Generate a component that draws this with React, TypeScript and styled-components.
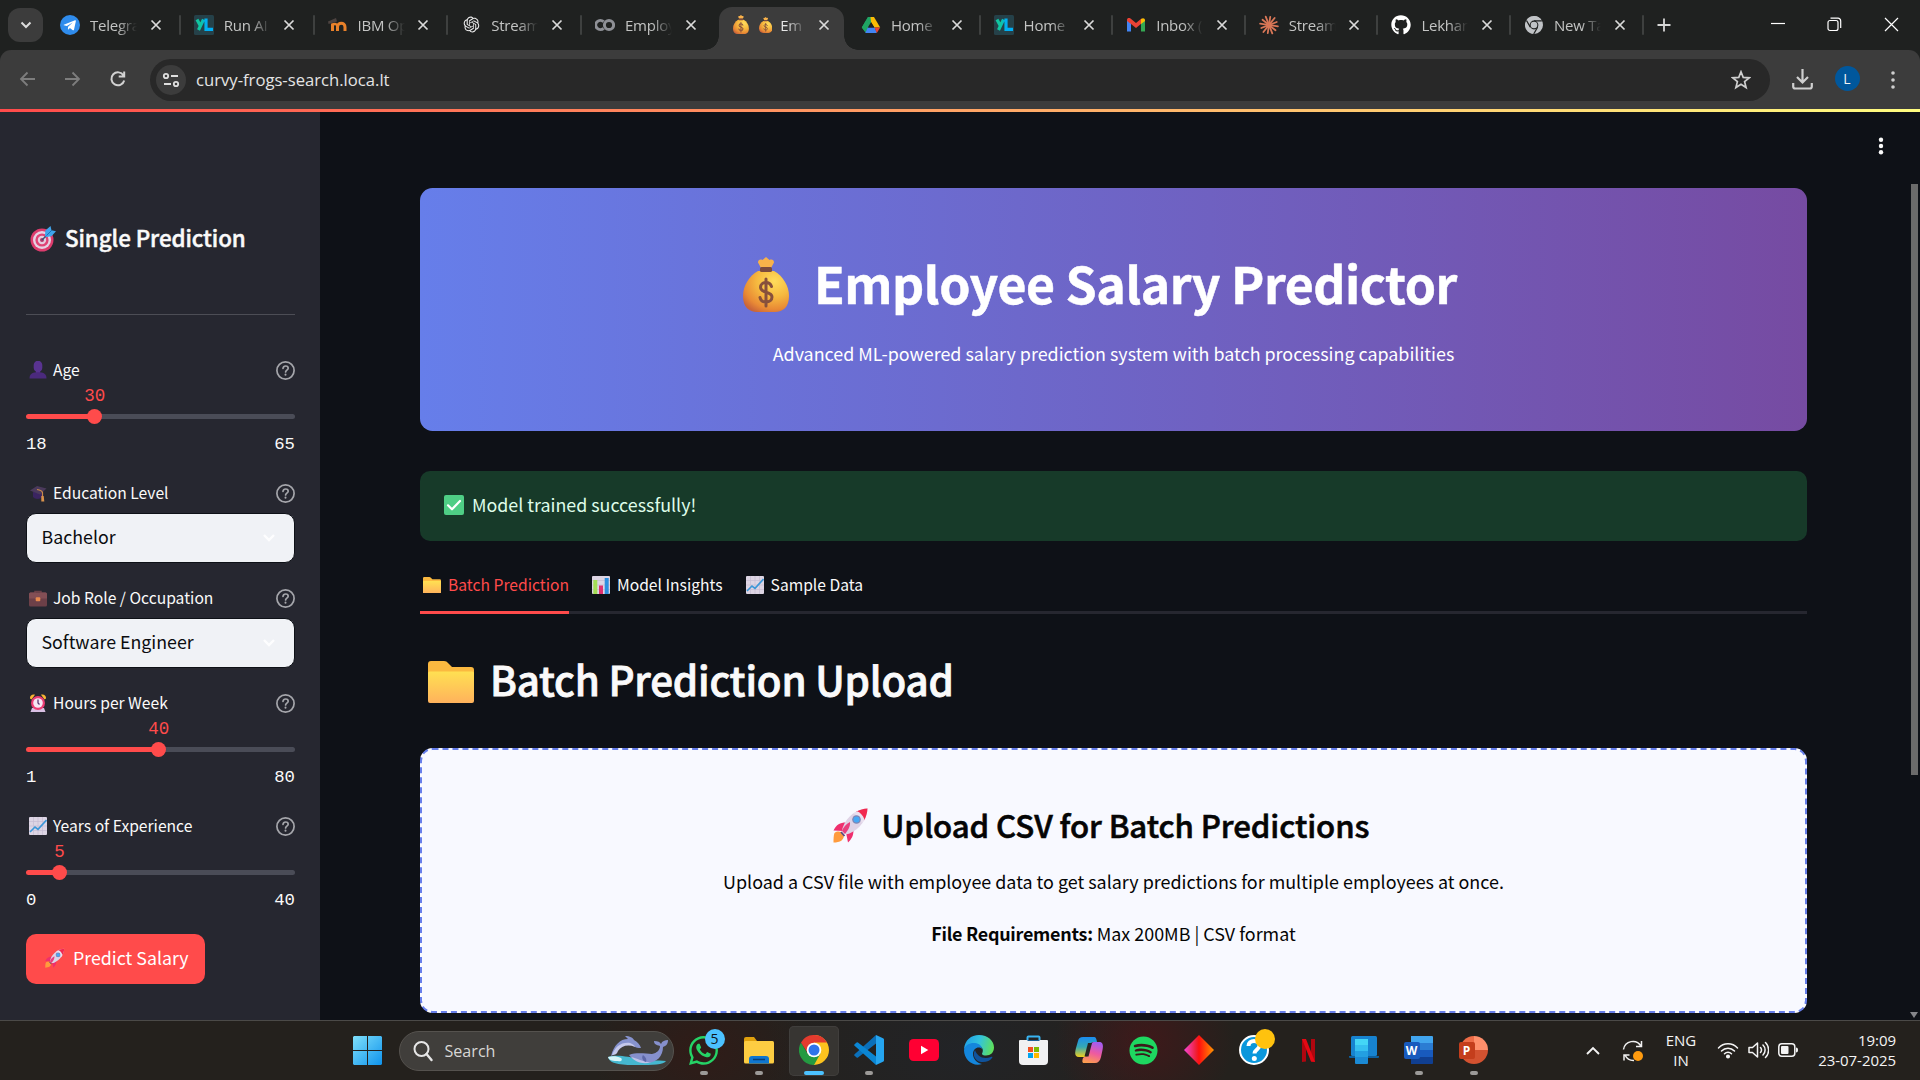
import React, { ReactNode } from 'react';
import styled, { createGlobalStyle } from 'styled-components';
import { RiOpenaiFill } from 'react-icons/ri';
import { FaGithub, FaSpotify, FaWhatsapp } from 'react-icons/fa';

const SANS = '"Noto Sans CJK SC", "Noto Sans", sans-serif';
const UI = '"Open Sans", "Noto Sans", sans-serif';
const MONO = '"Liberation Mono", monospace';

const GlobalStyle = createGlobalStyle`
  * { box-sizing: border-box; }
  html, body { margin: 0; padding: 0; background: #0e1117; overflow: hidden; }
  svg { display: block; flex: none; }
`;

const Screen = styled.div`
  width: 1920px;
  height: 1080px;
  display: flex;
  flex-direction: column;
  overflow: hidden;
  font-family: ${SANS};
`;

/* ---------- browser chrome ---------- */

const TabStrip = styled.div`
  height: 50px;
  flex: none;
  display: flex;
  background: #1f2120;
  color: #c8c9c8;
  font-family: ${UI};
`;

const TabSearch = styled.div`
  width: 35px;
  height: 34px;
  margin: 8px 4px 0 8px;
  border-radius: 12px;
  background: #3c3c3c;
  display: flex;
  align-items: center;
  justify-content: center;
`;

const BrowserTab = styled.div<{ $w: number; $active?: boolean }>`
  position: relative;
  width: ${(p) => p.$w}px;
  height: ${(p) => (p.$active ? 43 : 36)}px;
  margin-top: 7px;
  padding-left: 13px;
  padding-bottom: ${(p) => (p.$active ? 8 : 1)}px;
  display: flex;
  align-items: center;
  color: ${(p) => (p.$active ? '#e6e6e6' : '#c3c4c3')};
`;

const ActiveShape = styled.div`
  position: absolute;
  left: 3px;
  right: 4px;
  top: 0;
  bottom: 0;
  border-radius: 13px 13px 0 0;
  background: #3c3c3c;
  &::before,
  &::after {
    content: '';
    position: absolute;
    bottom: 0;
    width: 14px;
    height: 14px;
  }
  &::before {
    left: -14px;
    background: radial-gradient(circle at 0 0, transparent 13.5px, #3c3c3c 14px);
  }
  &::after {
    right: -14px;
    background: radial-gradient(circle at 100% 0, transparent 13.5px, #3c3c3c 14px);
  }
`;

const TabIcon = styled.span<{ $shift?: number }>`
  position: relative;
  width: 20px;
  height: 20px;
  margin: 0 ${(p) => -(p.$shift ?? 0)}px 0 ${(p) => p.$shift ?? 0}px;
  display: flex;
  align-items: center;
  justify-content: center;
`;

const TabTitle = styled.span`
  position: relative;
  width: 47px;
  margin-left: 10px;
  overflow: hidden;
  white-space: nowrap;
  font-size: 15px;
  line-height: 22px;
  letter-spacing: -0.25px;
  padding-top: 1px;
  display: flex;
  align-items: center;
  gap: 8px;
  mask-image: linear-gradient(90deg, #000 58%, transparent 100%);
`;

const TabClose = styled.span`
  position: relative;
  width: 14px;
  margin-left: 12.7px;
`;

const TabDivider = styled.span`
  width: 2px;
  height: 20px;
  border-radius: 1px;
  margin-left: auto;
  margin-right: 0;
  background: #3e403f;
`;

const NewTab = styled.div`
  padding: 18px 0 0 13px;
`;

const WindowButtons = styled.div`
  margin-left: auto;
  padding: 17px 21.5px 0 0;
  display: flex;
  gap: 42px;
`;

const ToolbarBack = styled.div`
  height: 59px;
  flex: none;
  background: #1f2120;
`;

const Toolbar = styled.div`
  height: 59px;
  padding: 0 19px;
  background: #3c3c3c;
  border-radius: 11px 11px 0 0;
  display: flex;
  align-items: center;
`;

const NavButtons = styled.div`
  width: 131px;
  display: flex;
  gap: 27px;
  padding-bottom: 1px;
`;

const Omnibox = styled.div`
  width: 1620px;
  height: 42px;
  padding: 0 19.5px 0 6px;
  border-radius: 21px;
  background: #282828;
  display: flex;
  align-items: center;
`;

const SiteInfo = styled.span`
  width: 30px;
  height: 30px;
  border-radius: 50%;
  background: #3c3c3c;
  display: flex;
  align-items: center;
  justify-content: center;
`;

const Url = styled.span`
  margin-left: 10px;
  flex: 1;
  font-family: ${UI};
  font-size: 16.65px;
  line-height: 24px;
  color: #e4e4e4;
`;

const ToolbarActions = styled.div`
  flex: 1;
  padding-left: 22px;
  display: flex;
  align-items: center;
`;

const Avatar = styled.span`
  width: 25px;
  height: 25px;
  margin: 0 30.500px 2px 21.5px;
  border-radius: 50%;
  background: #00579c;
  color: #f2f2f2;
  font: 400 14px/25px ${UI};
  text-align: center;
`;

/* ---------- page ---------- */

const Decoration = styled.div`
  height: 3px;
  flex: none;
  background: linear-gradient(90deg, #ff4b4b, #fffd80);
`;

const Page = styled.div`
  height: 908px;
  flex: none;
  display: flex;
  background: #0e1117;
  color: #fafafa;
  overflow: hidden;
`;

const Sidebar = styled.aside`
  width: 320px;
  padding: 110px 25px 0 26px;
  background: #262730;
`;

const SideTitle = styled.h3`
  margin: 0;
  height: 30px;
  padding-left: 4px;
  display: flex;
  align-items: center;
  gap: 9px;
  font-size: 22.4px;
  font-weight: 500;
  line-height: 30px;
  letter-spacing: -0.1px;
  -webkit-text-stroke: 0.45px #fafafa;
  svg { margin-top: 3px; }
`;

const SideRule = styled.hr`
  height: 1px;
  margin: 62px 0 40px;
  border: 0;
  background: #4c4d55;
`;

const Fields = styled.div`
  display: flex;
  flex-direction: column;
  align-items: flex-start;
  gap: 20px;
`;

const Field = styled.div`
  width: 269px;
`;

const LabelRow = styled.div`
  height: 30px;
  padding: 0 0 0 2.500px;
  display: flex;
  align-items: center;
  font-size: 15.65px;
  line-height: 28px;
  svg:last-child { margin-left: auto; }
`;

const LabelText = styled.span`
  margin-left: 6.5px;
`;

const SliderValues = styled.div`
  position: relative;
  height: 21px;
  font: 400 17.5px/21px ${MONO};
  color: #ff4b4b;
`;

const SliderValue = styled.span`
  position: absolute;
  top: 1px;
  transform: translateX(-50%);
`;

const SliderRail = styled.div`
  height: 21px;
  display: flex;
  align-items: center;
`;

const SliderFill = styled.div`
  height: 5px;
  border-radius: 3px 0 0 3px;
  background: #ff4b4b;
`;

const SliderThumb = styled.div`
  width: 15px;
  height: 15px;
  margin: 0 -7.5px;
  z-index: 1;
  border-radius: 50%;
  background: #ff4b4b;
`;

const SliderRest = styled.div`
  flex: 1;
  height: 5px;
  border-radius: 0 3px 3px 0;
  background: #4a4c57;
`;

const SliderBounds = styled.div`
  height: 31px;
  padding-top: 4px;
  display: flex;
  justify-content: space-between;
  font: 400 17.3px/28px ${MONO};
`;

const Select = styled.div`
  height: 50px;
  margin-top: 5px;
  padding: 0 18px 4px 14.5px;
  border: 1px solid #0e1117;
  border-radius: 10px;
  background: #f0f2f6;
  color: #0b0c0f;
  display: flex;
  align-items: center;
  justify-content: space-between;
  font-size: 17.8px;
  line-height: 30px;
  svg { margin-top: 4px; }
`;

const PredictButton = styled.button`
  width: 179px;
  height: 50px;
  padding: 0 0 4px 19px;
  border: 0;
  border-radius: 10px;
  background: #ff4b4b;
  color: #fff;
  display: flex;
  align-items: center;
  gap: 8px;
  font: 400 17.8px/30px ${SANS};
  svg { margin-top: 2px; }
`;

const Main = styled.main`
  width: 1387px;
  margin-left: 100px;
  padding-top: 76px;
`;

const Banner = styled.section`
  height: 243px;
  padding-top: 61px;
  border-radius: 12.5px;
  background: linear-gradient(90deg, #667eea 0%, #764ba2 100%);
  color: #fff;
`;

const BannerTitle = styled.h1`
  margin: 0;
  height: 67px;
  padding-right: 27px;
  display: flex;
  align-items: center;
  justify-content: center;
  gap: 25px;
  font-size: 50px;
  font-weight: 700;
  line-height: 67px;
  letter-spacing: -0.45px;
  -webkit-text-stroke: 0.5px #fff;
  white-space: nowrap;
  svg { margin-top: 3px; }
`;

const BannerText = styled.p`
  margin: 22px 0 0;
  text-align: center;
  font-size: 17.9px;
  line-height: 30px;
`;

const Alert = styled.div`
  height: 70px;
  margin-top: 40px;
  padding: 0 0 4px 24px;
  border-radius: 10px;
  background: #173a29;
  color: #dffde9;
  display: flex;
  align-items: center;
  gap: 8px;
  font-size: 17.85px;
  line-height: 30px;
  svg { margin-top: 1px; }
`;

const TabList = styled.div`
  height: 53px;
  margin-top: 20px;
  border-bottom: 3px solid #262730;
  display: flex;
  gap: 20px;
`;

const PageTab = styled.div<{ $active?: boolean }>`
  height: 53px;
  padding: 0 0 2px 3px;
  display: flex;
  align-items: center;
  gap: 7px;
  font-size: 15.65px;
  line-height: 28px;
  color: ${(p) => (p.$active ? '#ff4b4b' : '#fafafa')};
  border-bottom: 3px solid ${(p) => (p.$active ? '#ff4b4b' : 'transparent')};
`;

const SectionTitle = styled.h2`
  margin: 38px 0 0;
  height: 54px;
  padding-left: 8px;
  display: flex;
  align-items: center;
  gap: 16px;
  font-size: 40.3px;
  font-weight: 500;
  line-height: 54px;
  letter-spacing: -0.19px;
  -webkit-text-stroke: 0.8px #fafafa;
  svg { margin-top: 5px; }
`;

const UploadBox = styled.section`
  height: 265px;
  margin-top: 42px;
  padding-top: 54px;
  border: 2px dashed #667eea;
  border-radius: 12.5px;
  background: #f8f9ff;
  color: #050505;
  text-align: center;
`;

const UploadTitle = styled.h3`
  margin: 0;
  height: 42px;
  padding-right: 25px;
  display: flex;
  align-items: center;
  justify-content: center;
  gap: 13px;
  font-size: 31.2px;
  font-weight: 500;
  line-height: 42px;
  letter-spacing: -0.08px;
  -webkit-text-stroke: 0.6px #050505;
`;

const UploadText = styled.p<{ $gap: number }>`
  margin: ${(p) => p.$gap}px 0 0;
  font-size: 17.92px;
  line-height: 30px;
  b {
    font-weight: 700;
    letter-spacing: -0.25px;
  }
`;

const Gutter = styled.div`
  flex: 1;
  padding: 24px 2.500px 2px 0;
  display: flex;
  flex-direction: column;
  align-items: flex-end;
`;

const MenuDots = styled.div`
  padding-right: 34px;
`;

const ScrollThumb = styled.div`
  width: 7px;
  height: 591px;
  margin-top: 28px;
  background: #6b6b6b;
`;

const ScrollArrow = styled.div`
  margin-top: auto;
  border: 4.5px solid transparent;
  border-top: 6px solid #85868a;
  border-bottom: 0;
`;

/* ---------- taskbar ---------- */

const Taskbar = styled.footer`
  height: 60px;
  flex: none;
  padding-left: 353px;
  border-top: 1px solid #4b4a48;
  background:
    radial-gradient(ellipse 90px 80px at 1145px 20px, rgba(80, 20, 24, 0.6), transparent),
    radial-gradient(ellipse 110px 80px at 700px 30px, rgba(56, 24, 20, 0.6), transparent),
    radial-gradient(ellipse 200px 120px at 960px 30px, rgba(34, 36, 40, 0.9), transparent),
    #24211d;
  display: flex;
  align-items: center;
  font-family: ${UI};
  color: #f4f4f4;
`;

const SearchPill = styled.div`
  width: 275px;
  height: 40px;
  margin: 0 2px 0 17px;
  padding: 0 4px 0 13px;
  border: 1px solid #55524e;
  border-radius: 20px;
  background: #403e3b;
  display: flex;
  align-items: center;
  font-size: 16.1px;
  color: #d8d7d5;
`;

const SearchLabel = styled.span`
  flex: 1;
  margin-left: 11.5px;
`;

const AppSlot = styled.div<{ $focused?: boolean }>`
  position: relative;
  width: 50px;
  height: 50px;
  margin: 0 2.5px;
  padding-bottom: 1px;
  border-radius: 5px;
  background: ${(p) => (p.$focused ? '#373532' : 'transparent')};
  box-shadow: ${(p) => (p.$focused ? 'inset 0 0 0 1px #403e3c' : 'none')};
  display: flex;
  align-items: center;
  justify-content: center;
`;

const RunMark = styled.span<{ $wide?: boolean }>`
  position: absolute;
  bottom: 1px;
  left: ${(p) => (p.$wide ? 15 : 21)}px;
  width: ${(p) => (p.$wide ? 20 : 8)}px;
  height: 4px;
  border-radius: 2px;
  background: ${(p) => (p.$wide ? '#4cc2ff' : '#9c9a98')};
`;

const Badge = styled.span<{ $color: string }>`
  position: absolute;
  top: 3px;
  left: 26px;
  width: 20px;
  height: 20px;
  border-radius: 50%;
  background: ${(p) => p.$color};
  color: #10181d;
  font-size: 14px;
  line-height: 20px;
  text-align: center;
`;

const Tray = styled.div`
  margin-left: auto;
  padding-right: 24px;
  display: flex;
  align-items: center;
`;

const TrayText = styled.div<{ $w: number; $align: string }>`
  width: ${(p) => p.$w}px;
  padding-bottom: 2px;
  font-size: 15px;
  line-height: 20px;
  letter-spacing: -0.05px;
  text-align: ${(p) => p.$align};
`;

const TrayIcons = styled.div`
  margin: 0 0 2px 20px;
  display: flex;
  align-items: center;
  gap: 9px;
`;

/* ---------- drawings ---------- */

const MoneyBag = ({ h, id }: { h: number; id: string }) => (
  <svg width={(h * 46) / 55} height={h} viewBox="0 0 46 55">
    <defs>
      <radialGradient id={id} cx="0.68" cy="0.25" r="0.85">
        <stop offset="0" stopColor="#ffdc5c" />
        <stop offset="0.45" stopColor="#f6b93f" />
        <stop offset="0.8" stopColor="#e98a35" />
        <stop offset="1" stopColor="#c9643a" />
      </radialGradient>
    </defs>
    <path d="M18 11 15 5.500c0-2.500 2-3.500 4.500-2.500L23 0l3.500 3c2.500-1 4.500 0 4.500 2.500L28 11z" fill="#f9b24a" />
    <path d="M15 14h16c9 5 15 15 15 25 0 11-6 16-14 16H14C6 55 0 50 0 39 0 29 6 19 15 14z" fill={`url(#${id})`} />
    <rect x="17" y="10" width="12" height="5" rx="1.5" fill="#7b4a3e" />
    <path d="M28.5 29.500c-1-3-3-4-5.500-4-3 0-5.500 2-5.500 4.700 0 6.500 11.500 3.500 11.500 9.800 0 3-2.500 5-6 5s-5.500-2-6-4.500M23 22v27" fill="none" stroke="#87503c" strokeWidth="3" strokeLinecap="round" />
  </svg>
);

const Folder = ({ w, id }: { w: number; id: string }) => (
  <svg width={w} height={(w * 42) / 46} viewBox="0 0 46 42">
    <defs>
      <linearGradient id={id} x1="0" y1="0" x2="0" y2="1">
        <stop offset="0" stopColor="#ffe052" />
        <stop offset="1" stopColor="#ffb25c" />
      </linearGradient>
    </defs>
    <path d="M0 3a3 3 0 0 1 3-3h13c2 0 3 .7 4 2l4 4h19a3 3 0 0 1 3 3v12H0z" fill="#fbb940" />
    <path d="M0 12a1.500 1.500 0 0 1 1.500-1.500h43A1.500 1.500 0 0 1 46 12v28a2 2 0 0 1-2 2H2a2 2 0 0 1-2-2z" fill={`url(#${id})`} />
  </svg>
);

const Rocket = ({ s }: { s: number }) => (
  <svg width={s} height={s} viewBox="0 0 36 36">
    <path d="M1.500 26c3-2.500 7-1.500 8.500.5s1 5-1.500 7c-2 1.500-5 2-8 2 0-3 0-7 1-9.500z" fill="#ff9b3d" />
    <path d="M13 15.500c-6 0-9.500 2-12.500 8l9.500.5zM20.500 23c0 6-2 9-5.500 12.500l-2-10z" fill="#ef2f6e" />
    <path d="M34.500 1.500C24 2 14 9 10 20c-1 2-1 4 0 5l1.500 1.500c1 1 3 .8 5 0C27 22 34 12 34.500 1.500z" fill="#dfd3e6" />
    <path d="M34.500 1.500c-4 .2-8 1.200-11.500 3.200l8.200 8.500c2-3.600 3.100-7.500 3.300-11.700z" fill="#f1284f" />
    <path d="M24 4.200c3 1 6 4 7.500 8.300l-2.500 4C27 11 25 8 20 6.700z" fill="#e9e0ef" />
    <path d="M17 15c-4 2-7 5.500-8 9l3 3c3-4 5.500-7.500 5-12z" fill="#e8407e" />
    <circle cx="23.500" cy="12.500" r="4.300" fill="#7d86b5" />
    <circle cx="23.500" cy="12.500" r="3" fill="#47a8f5" />
    <path d="m8 25 3.500 4" stroke="#5c4a80" strokeWidth="1.800" />
  </svg>
);

const Target = () => (
  <svg width="26" height="26" viewBox="0 0 26 26">
    <circle cx="12" cy="14" r="11.500" fill="#dd3c6d" />
    <circle cx="12" cy="14" r="9" fill="#e6d3e4" />
    <circle cx="12" cy="14" r="6.600" fill="#e04476" />
    <circle cx="12" cy="14" r="4.200" fill="#e4cfe0" />
    <circle cx="12" cy="14" r="2" fill="#b5386a" />
    <path d="m12 14 7-7" stroke="#33557e" strokeWidth="1.500" />
    <path d="m15 10 .3-5.500L20.500 0l1 4.300 4.500 1-4.500 5-5 .7z" fill="#3fa4ec" />
    <path d="m16.500 9.500 5.500-5.500" stroke="#1d6fb8" strokeWidth="1" />
  </svg>
);

const Bust = () => (
  <svg width="18" height="18" viewBox="0 0 18 18">
    <path d="M4.700 4a4.300 4.300 0 0 1 8.600 0v3a4.300 4.300 0 0 1-2.300 3.800V12H7v-1.200A4.300 4.300 0 0 1 4.700 7z" fill="#593391" />
    <path d="M.5 17.500c0-4 2.500-6 6.500-6.200h4c4 .2 6.500 2.200 6.500 6.200z" fill="#4b2a7d" />
  </svg>
);

const GradCap = () => (
  <svg width="18" height="18" viewBox="0 0 18 18">
    <path d="M4 8v5c2 2.500 7 2.500 9 0V8z" fill="#3a2460" />
    <path d="M1 6.500 8 2l9.500 2.500-6.500 6z" fill="#4b3a5c" />
    <path d="M8 5.500c3 .5 5 1.200 5.500 3V15" fill="none" stroke="#c98a4b" strokeWidth="1.200" />
    <path d="M12.300 12h2.400l.6 5.500h-3z" fill="#d9934c" />
  </svg>
);

const Briefcase = () => (
  <svg width="18" height="18" viewBox="0 0 18 18">
    <path d="M6 4V2.500h6V4" fill="none" stroke="#6a4148" strokeWidth="1.500" />
    <rect y="3.500" width="18" height="14" rx="1.500" fill="#6d4048" />
    <path d="M0 5a1.500 1.500 0 0 1 1.500-1.500h15A1.500 1.500 0 0 1 18 5v4.500H0z" fill="#834f55" />
    <rect x="6.700" y="8.300" width="4.600" height="4" rx="1" fill="#e88a4e" />
  </svg>
);

const Alarm = () => (
  <svg width="18" height="18" viewBox="0 0 18 18">
    <path d="M3 14h12l1.500 4h-15z" fill="#d9c0e3" />
    <path d="M1 4.500C.5 2 3 0 6 .8L2.500 5.500zM17 4.500C17.500 2 15 0 12 .8l3.500 4.700z" fill="#f9b532" />
    <circle cx="9" cy="9" r="7" fill="#ec3c74" />
    <circle cx="9" cy="9" r="4.800" fill="#f6e6f4" />
    <path d="M9 5.500V9l1.500 1.500" stroke="#593873" strokeWidth="1.300" fill="none" />
  </svg>
);

const LineChart = () => (
  <svg width="18" height="18" viewBox="0 0 18 18">
    <rect width="18" height="18" rx="1" fill="#ddd5e4" />
    <path d="M0 4.500h18M0 9h18M0 13.500h18M4.500 0v18M9 0v18M13.500 0v18" stroke="#c6bdd3" strokeWidth="0.700" />
    <path d="m1 15 5-5 3 2.300L17.500 3" fill="none" stroke="#3a97d8" strokeWidth="1.600" />
  </svg>
);

const BarChart = () => (
  <svg width="18" height="18" viewBox="0 0 18 18">
    <rect width="18" height="18" rx="1" fill="#ddd5e4" />
    <path d="M0 4.500h18M0 9h18M0 13.500h18" stroke="#c6bdd3" strokeWidth="0.700" />
    <rect x="1.300" y="4" width="4" height="14" fill="#a4dd55" />
    <rect x="7" y="9.500" width="4" height="8.500" fill="#e1306f" />
    <rect x="12.700" y="2" width="4" height="16" fill="#2d8fe0" />
  </svg>
);

const CheckBoxIcon = () => (
  <svg width="20" height="20" viewBox="0 0 20 20">
    <rect width="20" height="20" rx="2" fill="#4fce85" />
    <path d="m4 10.300 4 4 8-8.300" fill="none" stroke="#fff" strokeWidth="2.200" strokeLinecap="round" strokeLinejoin="round" />
  </svg>
);

const Help = () => (
  <svg width="19" height="19" viewBox="0 0 19 19" fill="none" stroke="#a5a6ab" strokeWidth="1.700" strokeLinecap="round">
    <circle cx="9.500" cy="9.500" r="8.600" />
    <path d="M7 7.300C7.200 5.800 8.200 5 9.600 5c1.500 0 2.600.9 2.600 2.200 0 1.900-2.600 2-2.600 3.800" />
    <path d="M9.500 13.600v.2" strokeWidth="2" />
  </svg>
);

const Cross = () => (
  <svg width="12" height="12" viewBox="0 0 12 12">
    <path d="m1.500 1.500 9 9m0-9-9 9" stroke="#dadada" strokeWidth="1.700" />
  </svg>
);

const Dots = ({ color, r, step }: { color: string; r: number; step: number }) => (
  <svg width="6" height="20" viewBox="0 0 6 20" fill={color}>
    <circle cx="3" cy={10 - step} r={r} />
    <circle cx="3" cy="10" r={r} />
    <circle cx="3" cy={10 + step} r={r} />
  </svg>
);

const TelegramIcon = () => (
  <svg width="20" height="20" viewBox="0 0 20 20">
    <circle cx="10" cy="10" r="10" fill="#2f8cec" />
    <path d="M3.800 9.700 15 5.300c.6-.2 1 .1.900.8l-1.900 8.600c-.2.700-.6.800-1.200.5l-2.900-2.100-1.400 1.400c-.3.200-.6 0-.6-.4l.2-2.400 4.600-4.200-5.800 3.600-3-.9c-.4-.1-.4-.4-.1-.5z" fill="#fff" />
  </svg>
);

const YlIcon = () => (
  <svg width="20" height="20" viewBox="0 0 20 20">
    <defs>
      <linearGradient id="yl" gradientUnits="userSpaceOnUse" x1="0" y1="0" x2="20" y2="0">
        <stop offset="0.350" stopColor="#10c7a0" />
        <stop offset="0.600" stopColor="#00aef5" />
      </linearGradient>
    </defs>
    <rect width="20" height="20" rx="1.500" fill="#254149" />
    <path d="m3 4.500 3.200 6M9.500 4.500 4.500 15M12 3.500v10.800h7" fill="none" stroke="url(#yl)" strokeWidth="3.200" />
  </svg>
);

const MoodleIcon = () => (
  <svg width="20" height="20" viewBox="0 0 20 20">
    <path d="M4.500 16V8.500M9.500 16v-4c0-5 7.500-5 7.500 0v4" fill="none" stroke="#e9812a" strokeWidth="3" />
    <path d="M4.500 10c2-2 5-1 5 2" fill="none" stroke="#e9812a" strokeWidth="2.500" />
    <path d="M0 6.500 8 3l1 3.500-5 1.500-3.500 1z" fill="#4d4340" />
  </svg>
);

const ColabIcon = () => (
  <svg width="20" height="20" viewBox="0 0 20 20" fill="none" stroke="#8e9096" strokeWidth="3">
    <path d="M8.600 13.300a4.600 4.600 0 1 1 0-6.600" />
    <circle cx="14" cy="10" r="4.600" />
  </svg>
);

const DriveIcon = () => (
  <svg width="20" height="20" viewBox="0 0 20 20">
    <path d="M7 2h3.200v5.500L4.500 17 .8 12.500z" fill="#1fa463" />
    <path d="M7 2h6l6.200 10.500h-5.800z" fill="#fbbc04" />
    <path d="M7 2h2.500L10 7.300l-5.500 10.200L.8 12.500z" fill="#1fa463" />
    <path d="m4.200 18 2.600-5.500h7L15.800 18z" fill="#4285f4" />
    <path d="M13.500 12.500h5.700L15.800 18z" fill="#ea4335" />
    <path d="m10 7.300 3.200 5.200H6.800z" fill="#1f2120" />
  </svg>
);

const GmailIcon = () => (
  <svg width="20" height="20" viewBox="0 0 20 20">
    <path d="M1 5v11.500h4V8z" fill="#4285f4" />
    <path d="M19 5v11.500h-4V8z" fill="#34a853" />
    <path d="M1 5c0-2 2-2.500 3.500-1.500L10 8l5.500-4.500v5L10 13 5 9 1 6z" fill="#ea4335" />
    <path d="M15 4c2-1.500 4-.8 4 1.300V6l-4 3z" fill="#fbbc04" />
  </svg>
);

const ClaudeIcon = () => (
  <svg width="20" height="20" viewBox="0 0 20 20" stroke="#d97757" strokeWidth="1.800" strokeLinecap="round">
    {Array.from({ length: 12 }, (_, i) => {
      const a = (i * Math.PI) / 6 + 0.15;
      const r = i % 2 ? 8.300 : 9;
      return <path key={i} d={`M${10 + Math.cos(a)} ${10 + Math.sin(a)}L${10 + r * Math.cos(a)} ${10 + r * Math.sin(a)}`} />;
    })}
  </svg>
);

const ChromeIcon = ({ s, mono }: { s: number; mono?: boolean }) => (
  <svg width={s} height={s} viewBox="0 0 30 30">
    <path d="M15 15V0a15 15 0 0 1 0 30l-2-1z" fill={mono ? '#c0c3c6' : '#fcc31e'} />
    <path d="M2 7.500A15 15 0 0 0 15 30l6.500-11.500-13 0z" fill={mono ? '#c0c3c6' : '#249a41'} />
    <path d="M2 7.500a15 15 0 0 1 26 0H15l-6 11z" fill={mono ? '#c0c3c6' : '#e33b2e'} />
    {mono && <path d="M15 8h13M8.900 18.500 2.500 7.500M21 18.500 14.500 30" stroke="#1f2120" strokeWidth="2" fill="none" />}
    <circle cx="15" cy="15" r="7.300" fill={mono ? '#1f2120' : '#fff'} />
    <circle cx="15" cy="15" r="5.500" fill={mono ? '#c0c3c6' : '#2f74ea'} />
  </svg>
);

const Dolphin = () => (
  <svg width="62" height="31" viewBox="0 0 62 31">
    <path d="M1 22c8-3 22 0 30 2s20 1 28 2c-2 4-14 4-28 4S3 30 1 22z" fill="#45b7cf" />
    <path d="M1 22c4-1 9-1 13 1 2 2 0 4-3 3-4 0-9 0-10-4z" fill="#d7f3f7" />
    <path d="M4 21C7 10 13 4 21 4l-3-3c5 0 8 2 9 4 4 2 6 5 7 8-3 0-5 0-7-2-7-3-14-1-17 4-1 3-3 5-6 6z" fill="#8793cf" />
    <path d="M5 20C8 12 14 7 23 8c3 1 5 3 5 4-7-3-14-1-17 4-1 3-3 4-6 4z" fill="#c5c8ec" />
    <path d="M22 20c8-3 17-1 23-1 5-1 8-4 8-8-4-1-6-2-6-5 4 0 6 1 7 3 1-3 4-4 7-4 0 4-2 6-5 7 0 9-6 16-17 16-8-1-14-4-17-8z" fill="#8690cd" />
    <path d="M24 22c6 1 14 6 20 5-7 3-16 0-20-5z" fill="#bfc3e8" />
    <path d="M36 20c3 2 4 5 3 7-3-1-5-4-3-7z" fill="#5d67a8" />
  </svg>
);

const WindowsIcon = () => (
  <svg width="29" height="29" viewBox="0 0 29 29">
    <defs>
      <linearGradient id="win" x1="0" y1="0" x2="1" y2="1">
        <stop offset="0" stopColor="#7fe0fb" />
        <stop offset="1" stopColor="#0f93ec" />
      </linearGradient>
    </defs>
    <path d="M1 0h13v14H0V1zM15 0h13l1 1v13H15zM0 15h14v14H1l-1-1zM15 15h14v13l-1 1H15z" fill="url(#win)" />
  </svg>
);

const ExplorerIcon = () => (
  <svg width="30" height="27" viewBox="0 0 30 27">
    <path d="M0 2a2 2 0 0 1 2-2h8l3 4v5H0z" fill="#e0a00d" />
    <rect y="4" width="30" height="22.500" rx="1.500" fill="#fdcd42" />
    <path d="M5 26.500V22a3 3 0 0 1 3-3h14a3 3 0 0 1 3 3v4.500z" fill="#0f76cf" />
    <path d="M9 22.500h12" stroke="#0a3f75" strokeWidth="1.500" />
  </svg>
);

const CodeIcon = () => (
  <svg width="30" height="30" viewBox="0 0 30 30">
    <path d="M22 0v8.500L4 22.500a1 1 0 0 1-1.400 0L.6 20.700a1 1 0 0 1 0-1.500z" fill="#0b70ba" />
    <path d="M22 30v-8.500L4 7.500a1 1 0 0 0-1.400 0L.6 9.300a1 1 0 0 0 0 1.500z" fill="#0b86d4" />
    <path d="m22 0 7 3.300a1.500 1.500 0 0 1 1 1.500v20.400a1.500 1.500 0 0 1-1 1.500L22 30z" fill="#25a5f0" />
  </svg>
);

const YoutubeIcon = () => (
  <svg width="30" height="22" viewBox="0 0 30 22">
    <rect width="30" height="22" rx="4.500" fill="#ff0033" />
    <path d="M12 6.800v8.400l7.300-4.200z" fill="#fff" />
  </svg>
);

const EdgeIcon = () => (
  <svg width="30" height="30" viewBox="0 0 30 30">
    <defs>
      <linearGradient id="edgeTop" x1="0" y1="0.300" x2="1" y2="0.500">
        <stop offset="0" stopColor="#1f9fe8" />
        <stop offset="0.500" stopColor="#33c3dc" />
        <stop offset="1" stopColor="#5fe05a" />
      </linearGradient>
    </defs>
    <path d="M0 14C1 5 7 0 15 0c9 0 15 6 15 12.500 0 5-3.500 8-8 8-4 0-4.500-1.500-3.500-3 1-2.500 0-6-4-6.500C7 10 2 12 0 14z" fill="url(#edgeTop)" />
    <path d="M0 15c1-5 6-7.500 11-7 4 .5 7 3 7 6-3-3-9-1-9 5 0 5 4 9 9 10-9 3-18-4-18-14z" fill="#1486dc" />
    <path d="M11 15c-3 5 0 11 6 12 5 .5 9-1 11-4 1-1 0-1.500-1-1-8 3-14-1-16-7z" fill="#10539c" />
  </svg>
);

const StoreIcon = () => (
  <svg width="29" height="30" viewBox="0 0 29 30">
    <path d="M8.500 7V2.500a1 1 0 0 1 1-1h10a1 1 0 0 1 1 1V7" fill="none" stroke="#38b4f2" strokeWidth="2" />
    <path d="M0 6a1 1 0 0 1 1-1h27a1 1 0 0 1 1 1v20a4 4 0 0 1-4 4H4a4 4 0 0 1-4-4z" fill="#f1f1f2" />
    <path d="M9 12h5v5H9z" fill="#f25022" />
    <path d="M15 12h5v5h-5z" fill="#7fba00" />
    <path d="M9 18h5v5H9z" fill="#00a4ef" />
    <path d="M15 18h5v5h-5z" fill="#ffb900" />
    <path d="M8.500 5.500h12" stroke="#1a5f94" strokeWidth="1" />
  </svg>
);

const CopilotIcon = () => (
  <svg width="28" height="26" viewBox="0 0 28 26">
    <defs>
      <linearGradient id="cpA" x1="0" y1="0" x2="0" y2="1">
        <stop offset="0" stopColor="#1b8cf0" />
        <stop offset="0.500" stopColor="#35a9b4" />
        <stop offset="1" stopColor="#f2cf1c" />
      </linearGradient>
      <linearGradient id="cpB" x1="0.600" y1="0" x2="0.300" y2="1">
        <stop offset="0" stopColor="#a45cf0" />
        <stop offset="0.500" stopColor="#ee5aa0" />
        <stop offset="1" stopColor="#fd9d4f" />
      </linearGradient>
    </defs>
    <path d="M19 0c2 0 2.500 2 3 5h-3c-3 0-4 2-5 6l-2 7c-.7 2-1.500 2-3 2H4c-5 0-4-5-3-9L3 4c.8-3 2-4 5-4z" fill="url(#cpA)" />
    <path d="M9 26c-2 0-2-2-1-5l1-1c3 0 4-2 5-6l2-6c.8-3 2-3 4-3h4c5 0 4 5 3.500 8L26 20c-1 4-3 6-6 6z" fill="url(#cpB)" />
    <path d="M13 6h4l-3.500 13.500h-4z" fill="#262523" />
  </svg>
);

const DiamondIcon = () => (
  <svg width="30" height="30" viewBox="0 0 30 30">
    <defs>
      <linearGradient id="dia" x1="0" x2="1">
        <stop offset="0" stopColor="#f546d8" />
        <stop offset="0.400" stopColor="#ee2036" />
        <stop offset="0.500" stopColor="#ff0f0f" />
        <stop offset="1" stopColor="#ff9500" />
      </linearGradient>
    </defs>
    <path d="m15 0 15 15-15 15L0 15z" fill="url(#dia)" />
  </svg>
);

const HelpBadgeIcon = () => (
  <svg width="30" height="30" viewBox="0 0 30 30">
    <circle cx="15" cy="15" r="14" fill="#0a97dc" stroke="#fff" strokeWidth="2" />
    <path d="M9.500 11c0-3 2.500-5 5.500-5s5.500 2 5.500 4.500c0 4-5 4-5 8" fill="none" stroke="#fff" strokeWidth="4" />
    <circle cx="15.300" cy="23.500" r="2.500" fill="#fff" />
  </svg>
);

const NetflixIcon = () => (
  <svg width="13" height="23" viewBox="0 0 13 23">
    <path d="M0 0h4v22.500l-4 .5zM9 0h4v23l-4-.5z" fill="#b0060f" />
    <path d="M0 0h4l9 23-4-.5z" fill="#e50914" />
  </svg>
);

const PhoneLinkIcon = () => (
  <svg width="30" height="28" viewBox="0 0 30 28">
    <rect x="2" width="26" height="20" rx="1.500" fill="#1783d0" />
    <path d="M0 20h30v1a1 1 0 0 1-1 1H1a1 1 0 0 1-1-1z" fill="#0d5f9e" />
    <rect x="6" y="3" width="13" height="25" rx="1" fill="#1b8ad4" />
    <path d="M6 3h13v6H6z" fill="#44d6f6" />
    <path d="M6 9h13v6H6z" fill="#35bff0" />
    <path d="M6 15h13v6H6z" fill="#239fe2" />
  </svg>
);

const OfficeLetter = styled.span<{ $bg: string }>`
  position: absolute;
  left: 10px;
  top: 16px;
  width: 16px;
  height: 17px;
  border-radius: 2px;
  background: ${(p) => p.$bg};
  color: #fff;
  font: 700 12px/17px ${UI};
  text-align: center;
`;

const WordIcon = () => (
  <>
    <svg width="29" height="28" viewBox="0 0 29 28">
      <path d="M7 0h21a1 1 0 0 1 1 1v6H7z" fill="#41a5ee" />
      <path d="M7 7h22v7H7z" fill="#2b7cd3" />
      <path d="M7 14h22v7H7z" fill="#185abd" />
      <path d="M7 21h22v6a1 1 0 0 1-1 1H7z" fill="#103f91" />
    </svg>
    <OfficeLetter $bg="#185abd">W</OfficeLetter>
  </>
);

const PowerPointIcon = () => (
  <>
    <svg width="29" height="28" viewBox="0 0 29 28">
      <path d="M15 14V0a14 14 0 0 1 14 14z" fill="#ff8f6b" />
      <path d="M15 0v14H1A14 14 0 0 1 15 0z" fill="#ed6c47" />
      <path d="M1 14h28a14 14 0 0 1-28 0z" fill="#d35230" />
    </svg>
    <OfficeLetter $bg="#c43e1c">P</OfficeLetter>
  </>
);

/* ---------- data ---------- */

type TabInfo = { title: string; icon: ReactNode; active?: boolean; bag?: boolean; w: number; line?: boolean };
const tabs: TabInfo[] = [
  { title: 'Telegra', icon: <TelegramIcon />, w: 133.75, line: true },
  { title: 'Run AI', icon: <YlIcon />, w: 133.75, line: true },
  { title: 'IBM Op', icon: <MoodleIcon />, w: 133.75, line: true },
  { title: 'Stream', icon: <RiOpenaiFill size={19} color="#ececec" />, w: 133.75, line: true },
  { title: 'Employ', icon: <ColabIcon />, w: 133.75 },
  { title: 'Em', icon: <MoneyBag h={19} id="bagTab" />, active: true, bag: true, w: 132.25 },
  { title: 'Home', icon: <DriveIcon />, w: 132.6, line: true },
  { title: 'Home', icon: <YlIcon />, w: 132.6, line: true },
  { title: 'Inbox (', icon: <GmailIcon />, w: 132.6, line: true },
  { title: 'Stream', icon: <ClaudeIcon />, w: 132.6, line: true },
  { title: 'Lekhan', icon: <FaGithub size={20} color="#fff" />, w: 132.6, line: true },
  { title: 'New Ta', icon: <ChromeIcon s={18} mono />, w: 132.6, line: true },
];

function Slider({ icon, label, value, min, max }: { icon: ReactNode; label: string; value: number; min: number; max: number }) {
  const pct = `${((value - min) / (max - min)) * 100}%`;
  return (
    <Field>
      <LabelRow>{icon}<LabelText>{label}</LabelText><Help /></LabelRow>
      <SliderValues><SliderValue style={{ left: pct }}>{value}</SliderValue></SliderValues>
      <SliderRail>
        <SliderFill style={{ width: pct }} />
        <SliderThumb />
        <SliderRest />
      </SliderRail>
      <SliderBounds><span>{min}</span><span>{max}</span></SliderBounds>
    </Field>
  );
}

function SelectField({ icon, label, value }: { icon: ReactNode; label: string; value: string }) {
  return (
    <Field>
      <LabelRow>{icon}<LabelText>{label}</LabelText><Help /></LabelRow>
      <Select>
        {value}
        <svg width="14" height="10" viewBox="0 0 14 10">
          <path d="m2 2 5 5 5-5" fill="none" stroke="#fdfdfe" strokeWidth="2.400" />
        </svg>
      </Select>
    </Field>
  );
}

function Browser() {
  return (
    <>
      <TabStrip>
        <TabSearch>
          <svg width="12" height="8" viewBox="0 0 12 8"><path d="m1.500 1.500 4.500 4.500 4.500-4.500" fill="none" stroke="#dcdcdc" strokeWidth="2" /></svg>
        </TabSearch>
        {tabs.map((t, i) => (
          <BrowserTab key={i} $w={t.w} $active={t.active}>
            {t.active && <ActiveShape />}
            <TabIcon $shift={t.active ? 2.5 : 0}>{t.icon}</TabIcon>
            <TabTitle>{t.bag && <MoneyBag h={16} id="bagTitle" />}{t.title}</TabTitle>
            <TabClose><Cross /></TabClose>
            {t.line && <TabDivider />}
          </BrowserTab>
        ))}
        <NewTab>
          <svg width="14" height="14" viewBox="0 0 14 14"><path d="M7 .5v13M.5 7h13" stroke="#d6d6d6" strokeWidth="1.800" /></svg>
        </NewTab>
        <WindowButtons>
          <svg width="14" height="15" viewBox="0 0 14 15"><path d="M0 6.500h14" stroke="#fff" strokeWidth="1.200" /></svg>
          <svg width="15" height="15" viewBox="0 0 15 15" fill="none" stroke="#fff" strokeWidth="1.200">
            <rect x="1" y="3.500" width="10" height="10" rx="2" />
            <path d="M3.500 1.200h7.500a2.700 2.700 0 0 1 2.700 2.700V11" />
          </svg>
          <svg width="15" height="15" viewBox="0 0 15 15"><path d="m1 1 13 13M14 1 1 14" stroke="#fff" strokeWidth="1.200" /></svg>
        </WindowButtons>
      </TabStrip>
      <ToolbarBack>
        <Toolbar>
          <NavButtons>
            <svg width="18" height="18" viewBox="0 0 18 18" fill="none" stroke="#7d7d7d" strokeWidth="1.800"><path d="M16 9H2M8.500 2.500 2 9l6.500 6.500" /></svg>
            <svg width="18" height="18" viewBox="0 0 18 18" fill="none" stroke="#7d7d7d" strokeWidth="1.800"><path d="M1 9h14M8.500 2.500 15 9l-6.500 6.500" /></svg>
            <svg width="18" height="18" viewBox="0 0 18 18" fill="none" stroke="#d2d2d2" strokeWidth="2"><path d="M14.500 5.500A6.500 6.500 0 1 0 15.200 10.500M15.200 1.500V6.500h-5.500" /></svg>
          </NavButtons>
          <Omnibox>
            <SiteInfo>
              <svg width="18" height="18" viewBox="0 0 18 18" fill="none" stroke="#dedede" strokeWidth="1.800">
                <circle cx="4" cy="5" r="2.200" /><path d="M9 5h7M2 13h7" /><circle cx="14" cy="13" r="2.200" />
              </svg>
            </SiteInfo>
            <Url>curvy-frogs-search.loca.lt</Url>
            <svg width="20" height="20" viewBox="0 0 20 20"><path d="m10 1.800 2.200 5.600 6 .4-4.600 3.800 1.500 5.900-5.100-3.300-5.100 3.300 1.500-5.900L1.800 7.800l6-.4z" fill="none" stroke="#cfcfcf" strokeWidth="1.700" /></svg>
          </Omnibox>
          <ToolbarActions>
            <svg width="21" height="21" viewBox="0 0 21 21" fill="none" stroke="#cfcfcf" strokeWidth="2.200"><path d="M10.500 0v13M5 8l5.500 5.500L16 8M1.200 14v3.500a2 2 0 0 0 2 2h14.600a2 2 0 0 0 2-2V14" /></svg>
            <Avatar>L</Avatar>
            <Dots color="#cfcfcf" r={1.8} step={7} />
          </ToolbarActions>
        </Toolbar>
      </ToolbarBack>
      <Decoration />
    </>
  );
}

function TaskbarView() {
  return (
    <Taskbar>
      <WindowsIcon />
      <SearchPill>
        <svg width="20" height="22" viewBox="0 0 20 22" fill="none" stroke="#e6e6e6" strokeWidth="2"><circle cx="8.500" cy="9" r="7" /><path d="m13.500 14 5 6" strokeLinecap="round" strokeWidth="2.400" /></svg>
        <SearchLabel>Search</SearchLabel>
        <Dolphin />
      </SearchPill>
      <AppSlot><FaWhatsapp size={33} color="#25d366" /><Badge $color="#4cc2ff">5</Badge><RunMark /></AppSlot>
      <AppSlot><ExplorerIcon /><RunMark /></AppSlot>
      <AppSlot $focused><ChromeIcon s={30} /><RunMark $wide /></AppSlot>
      <AppSlot><CodeIcon /><RunMark /></AppSlot>
      <AppSlot><YoutubeIcon /></AppSlot>
      <AppSlot><EdgeIcon /></AppSlot>
      <AppSlot><StoreIcon /></AppSlot>
      <AppSlot><CopilotIcon /></AppSlot>
      <AppSlot><FaSpotify size={29} color="#1ed760" /></AppSlot>
      <AppSlot><DiamondIcon /></AppSlot>
      <AppSlot><HelpBadgeIcon /><Badge $color="#ffc20e" /></AppSlot>
      <AppSlot><NetflixIcon /></AppSlot>
      <AppSlot><PhoneLinkIcon /></AppSlot>
      <AppSlot><WordIcon /><RunMark /></AppSlot>
      <AppSlot><PowerPointIcon /><RunMark /></AppSlot>
      <Tray>
        <svg width="14" height="9" viewBox="0 0 14 9"><path d="m1 8 6-6 6 6" fill="none" stroke="#f4f4f4" strokeWidth="1.900" /></svg>
        <svg width="65" height="24" viewBox="0 0 65 24" fill="none" stroke="#f0f0f0" strokeWidth="1.500">
          <path d="M23.500 10.500A9.500 9.500 0 0 1 41 7M41.500 2v5.500h-5.500M34 21.500a9.500 9.500 0 0 1-9-5.500M24 21.500V16h5.500" />
          <circle cx="38" cy="17" r="5" fill="#ff9b0f" stroke="none" />
        </svg>
        <TrayText $w={32} $align="center">ENG<br />IN</TrayText>
        <TrayIcons>
          <svg width="22" height="18" viewBox="0 0 22 18" fill="none" stroke="#f4f4f4" strokeWidth="1.500" strokeLinecap="round">
            <path d="M1.500 7a13 13 0 0 1 19 0M4.500 10a9 9 0 0 1 13 0M7.500 12.800a5 5 0 0 1 7 0" /><circle cx="11" cy="15.500" r="1.300" fill="#f4f4f4" />
          </svg>
          <svg width="21" height="18" viewBox="0 0 21 18" fill="none" stroke="#f4f4f4" strokeWidth="1.500" strokeLinejoin="round" strokeLinecap="round">
            <path d="M1 6.500h3.500L9.500 2v14l-5-4.500H1zM12.500 6.500a4 4 0 0 1 0 5M15 4a7 7 0 0 1 0 10M17.500 1.500a10.500 10.500 0 0 1 0 15" />
          </svg>
          <svg width="20" height="14" viewBox="0 0 20 14">
            <rect x="0.800" y="0.800" width="16" height="12.400" rx="3" fill="none" stroke="#f4f4f4" strokeWidth="1.500" />
            <rect x="3" y="3" width="7.500" height="8" rx="1" fill="#f4f4f4" />
            <path d="M18 4.500c1.200 0 2 .8 2 2.500s-.8 2.500-2 2.500z" fill="#f4f4f4" />
          </svg>
        </TrayIcons>
        <TrayText $w={98} $align="right">19:09<br />23-07-2025</TrayText>
      </Tray>
    </Taskbar>
  );
}

export default function App() {
  return (
    <Screen>
      <GlobalStyle />
      <Browser />
      <Page>
        <Sidebar>
          <SideTitle><Target />Single Prediction</SideTitle>
          <SideRule />
          <Fields>
            <Slider icon={<Bust />} label="Age" value={30} min={18} max={65} />
            <SelectField icon={<GradCap />} label="Education Level" value="Bachelor" />
            <SelectField icon={<Briefcase />} label="Job Role / Occupation" value="Software Engineer" />
            <Slider icon={<Alarm />} label="Hours per Week" value={40} min={1} max={80} />
            <Slider icon={<LineChart />} label="Years of Experience" value={5} min={0} max={40} />
            <PredictButton><Rocket s={20} />Predict Salary</PredictButton>
          </Fields>
        </Sidebar>
        <Main>
          <Banner>
            <BannerTitle><MoneyBag h={55} id="bagBig" />Employee Salary Predictor</BannerTitle>
            <BannerText>Advanced ML-powered salary prediction system with batch processing capabilities</BannerText>
          </Banner>
          <Alert><CheckBoxIcon />Model trained successfully!</Alert>
          <TabList>
            <PageTab $active><Folder w={18} id="folderTab" />Batch Prediction</PageTab>
            <PageTab><BarChart />Model Insights</PageTab>
            <PageTab><LineChart />Sample Data</PageTab>
          </TabList>
          <SectionTitle><Folder w={46} id="folderBig" />Batch Prediction Upload</SectionTitle>
          <UploadBox>
            <UploadTitle><Rocket s={36} />Upload CSV for Batch Predictions</UploadTitle>
            <UploadText $gap={20}>Upload a CSV file with employee data to get salary predictions for multiple employees at once.</UploadText>
            <UploadText $gap={22}><b>File Requirements:</b> Max 200MB | CSV format</UploadText>
          </UploadBox>
        </Main>
        <Gutter>
          <MenuDots><Dots color="#fafafa" r={2.2} step={6.3} /></MenuDots>
          <ScrollThumb />
          <ScrollArrow />
        </Gutter>
      </Page>
      <TaskbarView />
    </Screen>
  );
}
